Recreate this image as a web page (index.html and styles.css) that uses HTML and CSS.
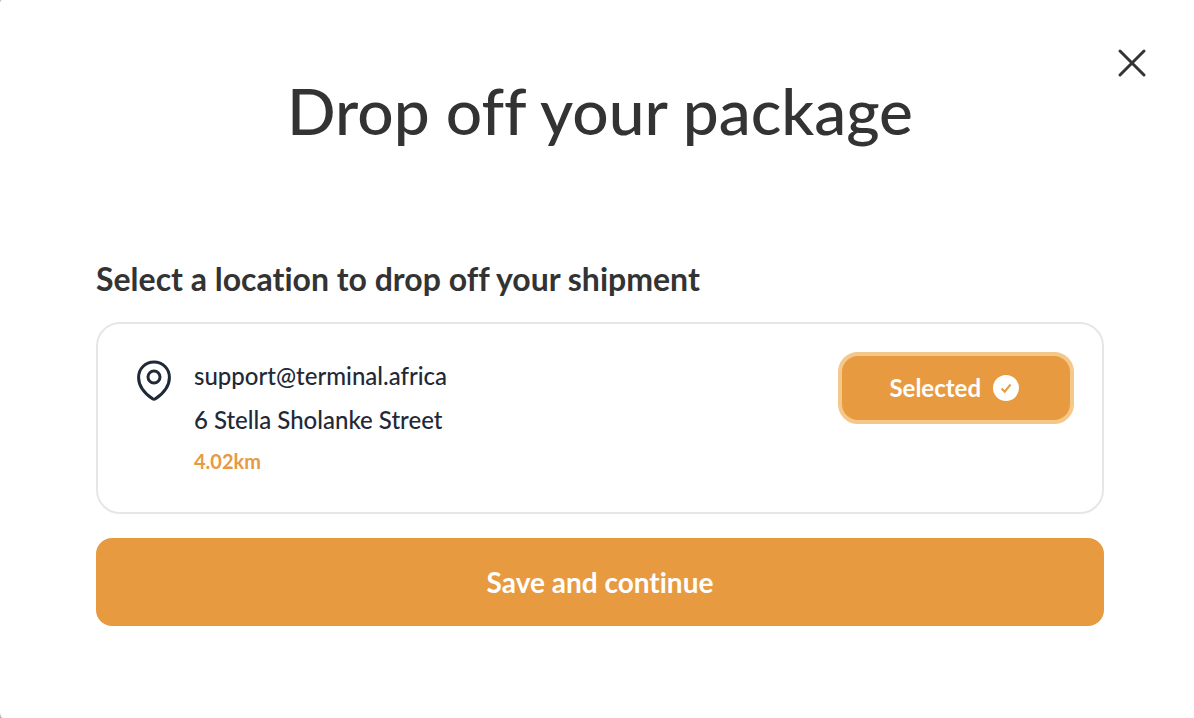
FILE: index.html
```html
<!DOCTYPE html>
<html lang="en">
<head>
  <meta charset="UTF-8">
  <meta name="viewport" content="width=device-width, initial-scale=1.0">
  <title>Drop off your package</title>
  <link rel="stylesheet" href="styles.css">
</head>
<body>
  <main class="modal" role="dialog" aria-labelledby="modal-title">
    <button type="button" class="close-button" aria-label="Close">
      <svg width="32" height="32" viewBox="0 0 32 32" fill="none" stroke="currentColor" stroke-width="3" stroke-linecap="round">
        <path d="M4 4L28 28M28 4L4 28" />
      </svg>
    </button>
    <h1 id="modal-title">Drop off your package</h1>

    <form class="dropoff-form">
      <h2>Select a location to drop off your shipment</h2>
      <div class="location-card">
        <svg class="pin-icon" width="36" height="42" viewBox="0 0 36 42" fill="none" stroke="currentColor" stroke-width="3" stroke-linejoin="round">
          <path d="M18 2C9.2 2 2.6 8.8 2.6 17.4C2.6 26.2 9 33.6 16.6 38.8Q18 39.8 19.4 38.8C27 33.6 33.4 26.2 33.4 17.4C33.4 8.8 26.8 2 18 2Z" />
          <circle cx="18" cy="17" r="6" />
        </svg>
        <div class="location-details">
          <p>support@terminal.africa</p>
          <p>6 Stella Sholanke Street</p>
          <p class="distance">4.02km</p>
        </div>
        <button type="button" class="select-button" aria-pressed="true">
          Selected
          <svg width="26" height="26" viewBox="0 0 26 26" fill="none">
            <circle cx="13" cy="13" r="13" fill="#fff" />
            <path d="M8.5 13.5L11.7 16.7L17.5 9.5" stroke="#e89a40" stroke-width="2" />
          </svg>
        </button>
      </div>
      <button type="submit" class="save-button">Save and continue</button>
    </form>
  </main>
</body>
</html>
```
FILE: styles.css
```css
* {
  box-sizing: border-box;
}

body {
  margin: 0;
  background-color: #b5b5b5;
  color: #333;
  font-family: Lato, sans-serif;
  font-variant-ligatures: none;
}

.modal {
  position: relative;
  min-height: 100vh;
  padding: 71px 90px 92px 96px;
  background-color: #fff;
  border-radius: 2px 0 0 3px / 4px 0 0 6px;
}

h1,
h2,
p {
  margin: 0;
}

h1 {
  font-size: 64px;
  font-weight: 500;
  line-height: 80px;
  text-align: center;
}

h2 {
  font-size: 32px;
  font-weight: 700;
  line-height: 40px;
}

button {
  border: none;
  font-family: inherit;
  font-variant-ligatures: none;
  font-weight: 700;
  color: #fff;
  cursor: pointer;
}

button svg {
  display: block;
}

/* Sits over the top right corner of the modal */
.close-button {
  position: absolute;
  top: 47px;
  right: 46px;
  padding: 0;
  background: none;
  color: #333;
}

.dropoff-form {
  margin-top: 108px;
}

.location-card {
  display: flex;
  align-items: flex-start;
  margin: 23px 0 24px;
  padding: 28px 28px 32px 38px;
  border: 2px solid #e6e6e6;
  border-radius: 24px;
  color: #1f2937;
}

.pin-icon {
  flex-shrink: 0;
  margin-top: 8px;
}

.location-details {
  flex: 1;
  margin-left: 22px;
  padding-top: 2px;
  font-size: 24px;
  font-weight: 500;
  line-height: 44px;
}

.location-details .distance {
  color: #e89a40;
  font-size: 20px;
  font-weight: 700;
  line-height: 38px;
}

.select-button {
  display: flex;
  align-items: center;
  gap: 12px;
  padding: 18px 51px 18px 47px;
  background-color: #e89a40;
  border: 4px solid #f4c78b;
  border-radius: 20px;
  font-size: 24px;
  line-height: 28px;
}

.save-button {
  width: 100%;
  padding: 24px;
  background-color: #e89a40;
  border-radius: 16px;
  font-size: 28px;
  line-height: 40px;
}
```
